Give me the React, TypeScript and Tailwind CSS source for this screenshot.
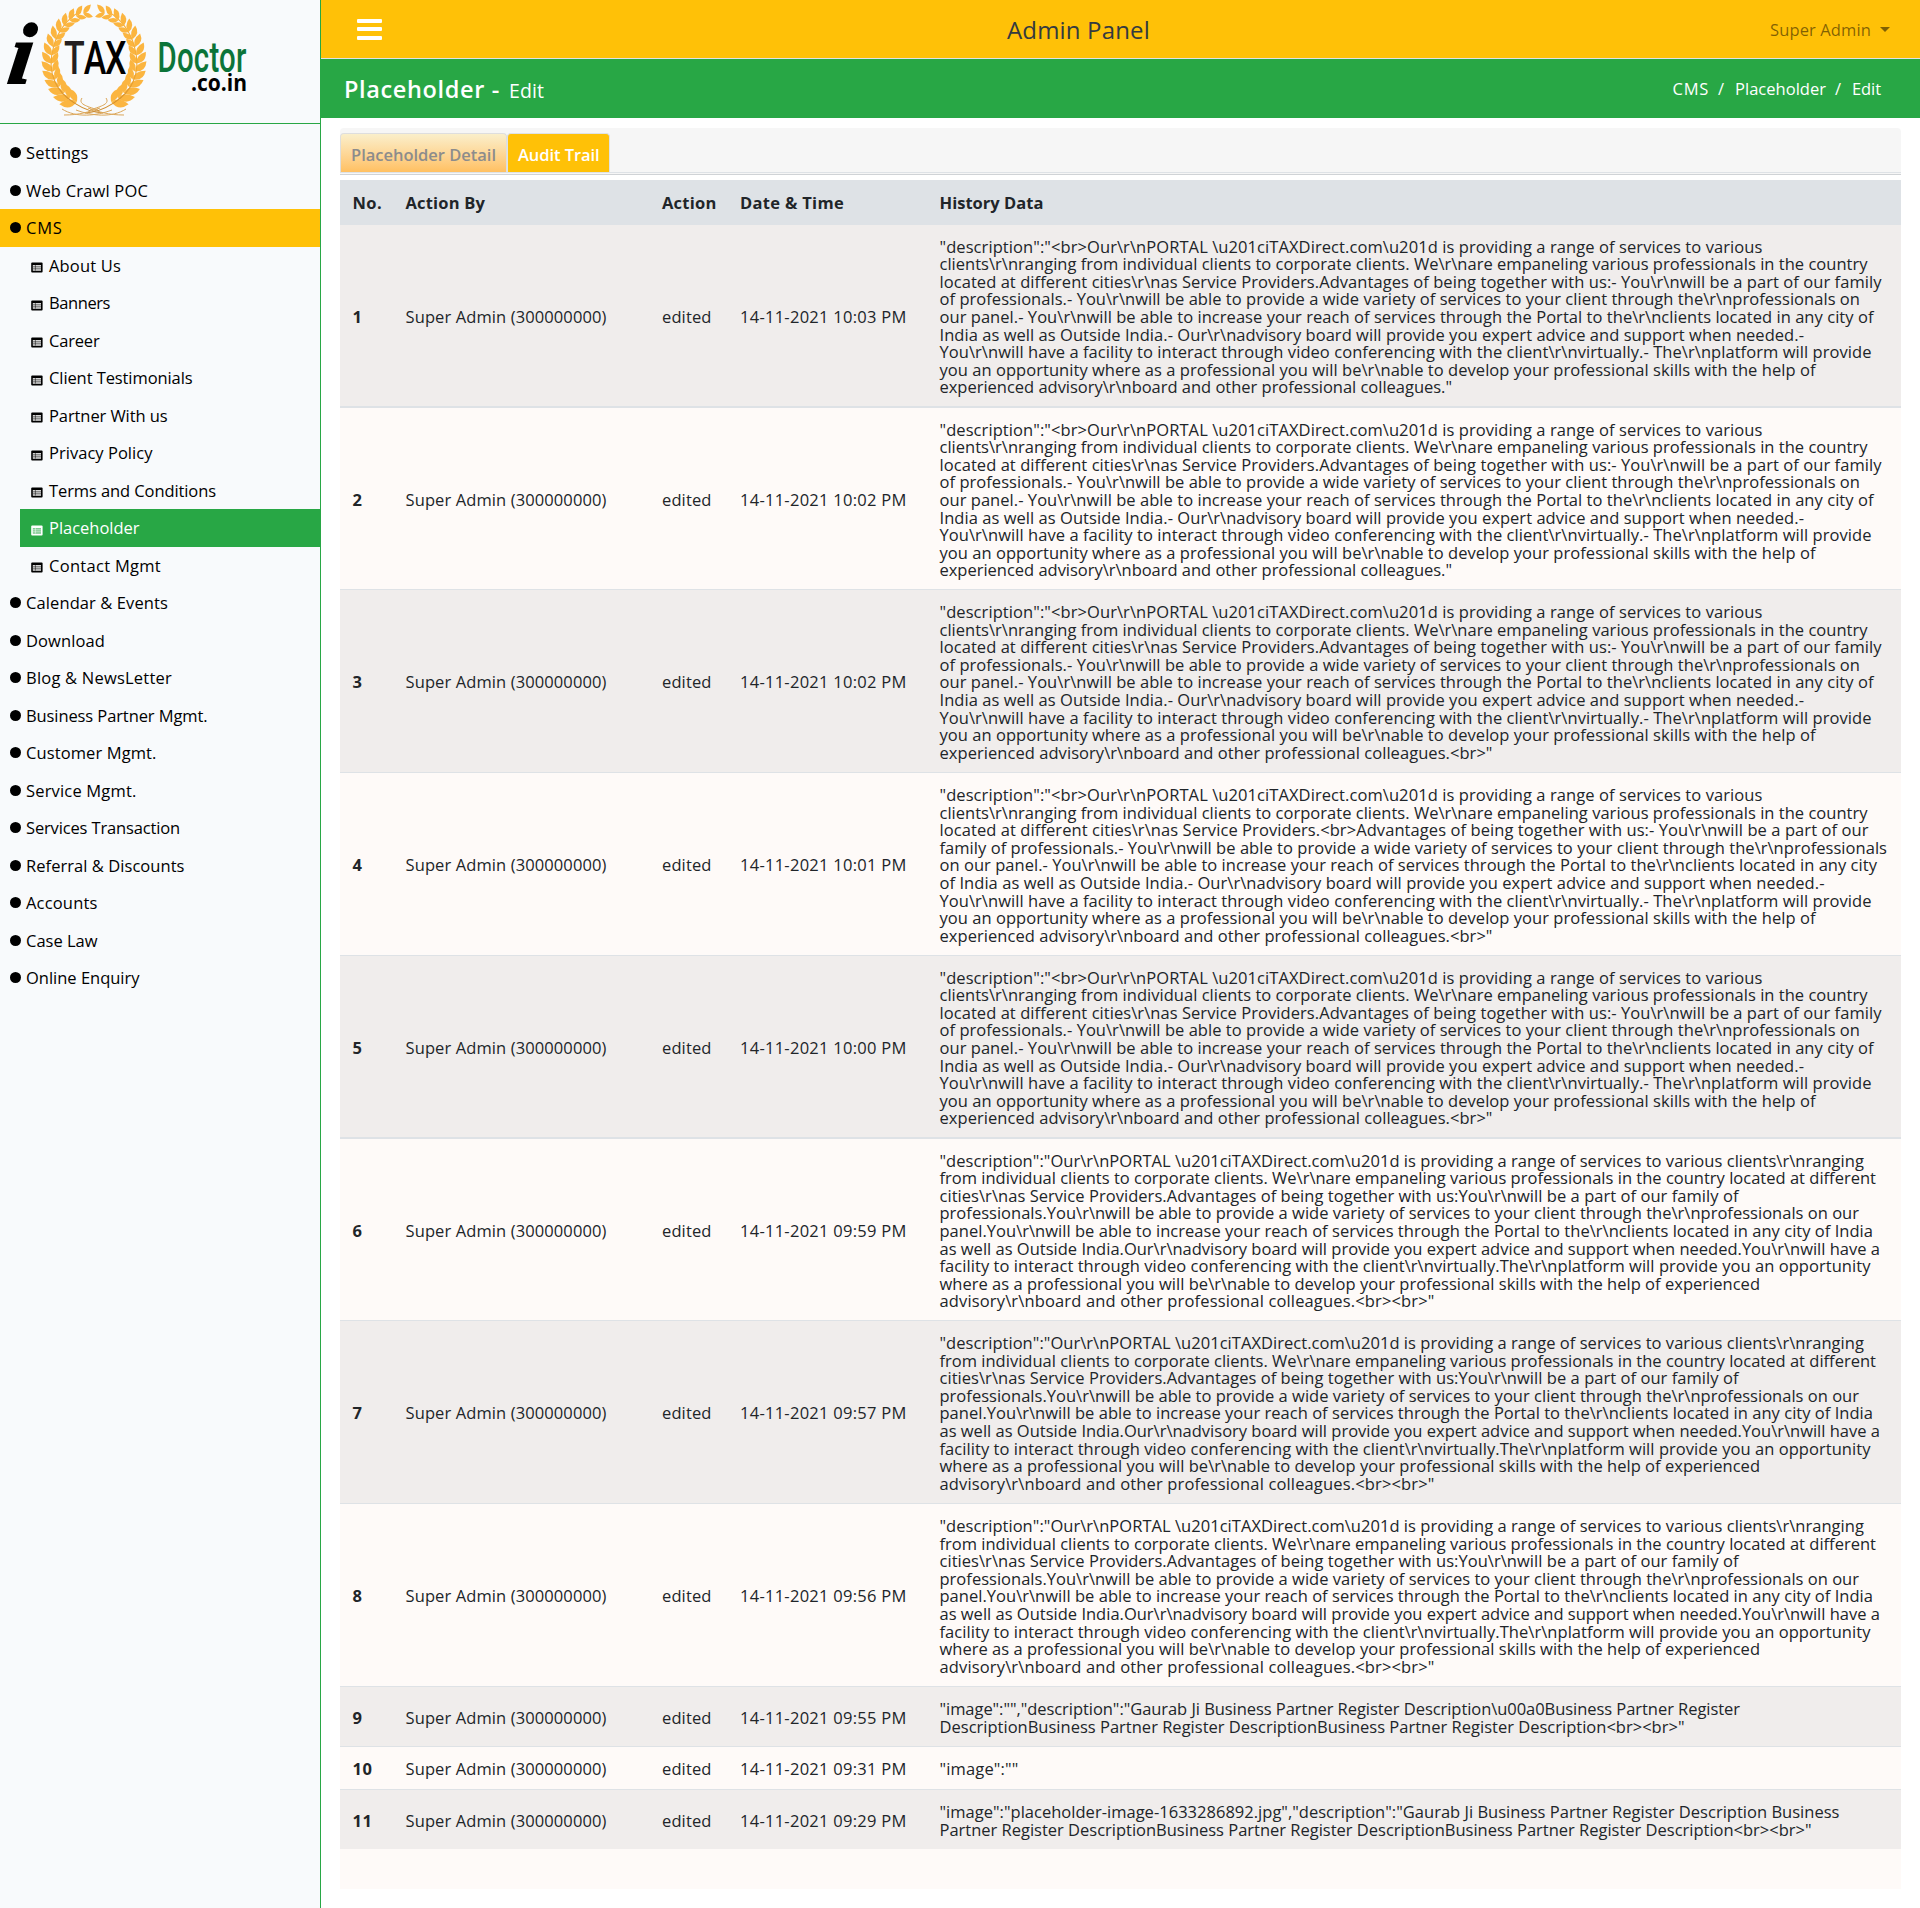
import { useLayoutEffect, useRef, useState } from "react";

/* Text set to a given width by spreading the difference over its letters. */
function Fit({ w, children, className = "" }: { w: number; children: string; className?: string }) {
  const ref = useRef<HTMLSpanElement>(null);
  const [spacing, setSpacing] = useState(0);
  useLayoutEffect(() => {
    if (!ref.current) return;
    const natural = ref.current.getBoundingClientRect().width - spacing * children.length;
    setSpacing((w - natural) / children.length);
  }, [w, children]);
  return (
    <span ref={ref} className={`inline-block whitespace-pre ${className}`} style={{ letterSpacing: `${spacing}px` }}>
      {children}
    </span>
  );
}

type Line = [string, number];

const intro: Line[] = [
  [String.raw`"description":"<br>Our\r\nPORTAL \u201ciTAXDirect.com\u201d is providing a range of services to various`, 823],
  [String.raw`clients\r\nranging from individual clients to corporate clients. We\r\nare empaneling various professionals in the country`, 928],
];
const ending: Line[] = [
  [String.raw`You\r\nwill have a facility to interact through video conferencing with the client\r\nvirtually.- The\r\nplatform will provide`, 932],
  [String.raw`you an opportunity where as a professional you will be\r\nable to develop your professional skills with the help of`, 876],
];
const body: Line[] = [
  ...intro,
  [String.raw`located at different cities\r\nas Service Providers.Advantages of being together with us:- You\r\nwill be a part of our family`, 942],
  [String.raw`of professionals.- You\r\nwill be able to provide a wide variety of services to your client through the\r\nprofessionals on`, 920.5],
  [String.raw`our panel.- You\r\nwill be able to increase your reach of services through the Portal to the\r\nclients located in any city of`, 934],
  [String.raw`India as well as Outside India.- Our\r\nadvisory board will provide you expert advice and support when needed.-`, 864.5],
  ...ending,
];
const lastPlain: Line = [String.raw`experienced advisory\r\nboard and other professional colleagues."`, 512.5];
const lastBr: Line = [String.raw`experienced advisory\r\nboard and other professional colleagues.<br>"`, 553];
const plain: Line[] = [...body, lastPlain];
const withBr: Line[] = [...body, lastBr];
const midBr: Line[] = [
  ...intro,
  [String.raw`located at different cities\r\nas Service Providers.<br>Advantages of being together with us:- You\r\nwill be a part of our`, 929],
  [String.raw`family of professionals.- You\r\nwill be able to provide a wide variety of services to your client through the\r\nprofessionals`, 947.5],
  [String.raw`on our panel.- You\r\nwill be able to increase your reach of services through the Portal to the\r\nclients located in any city`, 937.5],
  [String.raw`of India as well as Outside India.- Our\r\nadvisory board will provide you expert advice and support when needed.-`, 885],
  ...ending,
  lastBr,
];
const joined: Line[] = [
  [String.raw`"description":"Our\r\nPORTAL \u201ciTAXDirect.com\u201d is providing a range of services to various clients\r\nranging`, 924.5],
  [String.raw`from individual clients to corporate clients. We\r\nare empaneling various professionals in the country located at different`, 936.5],
  [String.raw`cities\r\nas Service Providers.Advantages of being together with us:You\r\nwill be a part of our family of`, 799],
  [String.raw`professionals.You\r\nwill be able to provide a wide variety of services to your client through the\r\nprofessionals on our`, 919.5],
  [String.raw`panel.You\r\nwill be able to increase your reach of services through the Portal to the\r\nclients located in any city of India`, 933.5],
  [String.raw`as well as Outside India.Our\r\nadvisory board will provide you expert advice and support when needed.You\r\nwill have a`, 940.5],
  [String.raw`facility to interact through video conferencing with the client\r\nvirtually.The\r\nplatform will provide you an opportunity`, 931],
  [String.raw`where as a professional you will be\r\nable to develop your professional skills with the help of experienced`, 820.5],
  [String.raw`advisory\r\nboard and other professional colleagues.<br><br>"`, 495],
];

const rows: { time: string; lines: Line[]; size: string }[] = [
  { time: "10:03", lines: plain, size: "h-[183px] border-b-2" },
  { time: "10:02", lines: plain, size: "h-[182px] border-b" },
  { time: "10:02", lines: withBr, size: "h-[183px] border-b" },
  { time: "10:01", lines: midBr, size: "h-[183px] border-b" },
  { time: "10:00", lines: withBr, size: "h-[183px] border-b-2" },
  { time: "09:59", lines: joined, size: "h-[182px] border-b" },
  { time: "09:57", lines: joined, size: "h-[183px] border-b" },
  { time: "09:56", lines: joined, size: "h-[183px] border-b" },
  {
    time: "09:55",
    lines: [
      [String.raw`"image":"","description":"Gaurab Ji Business Partner Register Description\u00a0Business Partner Register`, 800.5],
      [`DescriptionBusiness Partner Register DescriptionBusiness Partner Register Description<br><br>"`, 745],
    ],
    size: "h-[60px] border-b",
  },
  { time: "09:31", lines: [[`"image":""`, 79]], size: "h-[43px] border-b" },
  {
    time: "09:29",
    lines: [
      [`"image":"placeholder-image-1633286892.jpg","description":"Gaurab Ji Business Partner Register Description Business`, 900],
      [`Partner Register DescriptionBusiness Partner Register DescriptionBusiness Partner Register Description<br><br>"`, 872],
    ],
    size: "h-[59px]",
  },
];

const menu: { label: string; w: number; sub?: boolean }[] = [
  { label: "Settings", w: 62.5 },
  { label: "Web Crawl POC", w: 122 },
  { label: "CMS", w: 36.5 },
  { label: "About Us", w: 72, sub: true },
  { label: "Banners", w: 61, sub: true },
  { label: "Career", w: 50.5, sub: true },
  { label: "Client Testimonials", w: 143.5, sub: true },
  { label: "Partner With us", w: 118.5, sub: true },
  { label: "Privacy Policy", w: 103.5, sub: true },
  { label: "Terms and Conditions", w: 167, sub: true },
  { label: "Placeholder", w: 90.5, sub: true },
  { label: "Contact Mgmt", w: 112, sub: true },
  { label: "Calendar & Events", w: 142 },
  { label: "Download", w: 79 },
  { label: "Blog & NewsLetter", w: 146 },
  { label: "Business Partner Mgmt.", w: 181.5 },
  { label: "Customer Mgmt.", w: 130.5 },
  { label: "Service Mgmt.", w: 110.5 },
  { label: "Services Transaction", w: 154 },
  { label: "Referral & Discounts", w: 158.5 },
  { label: "Accounts", w: 71.5 },
  { label: "Case Law", w: 71.5 },
  { label: "Online Enquiry", w: 113.5 },
];

/* One half of the laurel wreath: leaves set along an elliptical stem. */
function Branch() {
  const leaves = [];
  for (let i = 0; i < 15; i++) {
    const deg = 24 + i * 10.1;
    const t = (deg * Math.PI) / 180;
    const x = 94 - 42.5 * Math.sin(t);
    const y = 59 + 47 * Math.cos(t);
    const dir = (Math.atan2(-47 * Math.sin(t), -42.5 * Math.cos(t)) * 180) / Math.PI;
    const l = 17.5 - i * 0.4;
    const h = 8.6 - i * 0.2;
    const d = `M0 0Q${l * 0.5} ${-h} ${l} 0Q${l * 0.4} ${h * 0.8} 0 0`;
    leaves.push(<path key={`o${i}`} d={d} transform={`translate(${x} ${y}) rotate(${dir - 34})`} />);
    leaves.push(<path key={`n${i}`} d={d} transform={`translate(${x} ${y}) rotate(${dir + 34}) scale(.85 -.85)`} />);
  }
  return (
    <g>
      {leaves}
      <path d="M103 113C84 112 62 98 55 82C46 62 53 28 79 12" fill="none" stroke="url(#gold)" strokeWidth="1.1" />
      <path d="M112 110C96 116 76 118 62 109M98 110C86 106 78 104 82 98M124 115C108 115 100 112 88 108" fill="none" stroke="#dca75a" strokeWidth="1" />
    </g>
  );
}

function Logo() {
  return (
    <svg width="260" height="122" viewBox="0 0 260 122" overflow="visible">
      <defs>
        <linearGradient id="gold" gradientUnits="userSpaceOnUse" x1="0" y1="5" x2="0" y2="115">
          <stop offset="0" stopColor="#fbb540" />
          <stop offset=".55" stopColor="#f5aa33" />
          <stop offset="1" stopColor="#c8872c" />
        </linearGradient>
      </defs>
      <g fill="url(#gold)">
        <Branch />
        <g transform="translate(188 0) scale(-1 1)">
          <Branch />
        </g>
      </g>
      <text x="0" y="0" transform="translate(6 83) skewX(-8)" fontSize="86" fontWeight="700" fontStyle="italic" stroke="#000" strokeWidth="2" className="font-['Liberation_Serif',serif]">i</text>
      <text x="0" y="0" transform="translate(64 74) scale(.74 1)" fontSize="46" fontWeight="500" className="font-['Roboto',sans-serif] tracking-[-1.5px]"><tspan fill="#231f20">T</tspan><tspan>AX</tspan></text>
      <text x="0" y="0" transform="translate(157.5 72) scale(.7 1)" fontSize="42" fontWeight="500" fill="#0b7439" textLength="127" lengthAdjust="spacing" className="font-['Roboto',sans-serif]">Doctor</text>
      <text x="191" y="91" fontSize="23" fontWeight="700" textLength="56" lengthAdjust="spacingAndGlyphs" className="font-['Open_Sans',sans-serif]">.co.in</text>
    </svg>
  );
}

function ListIcon({ active }: { active: boolean }) {
  const ink = active ? "#fff" : "#000";
  const fill = active ? "#7fcb92" : "#d6d6d6";
  return (
    <svg width="12" height="11" viewBox="0 0 12 11" className="mt-[5px] shrink-0">
      <rect x="0.2" y="0.4" width="11.4" height="10" rx="1" fill={ink} />
      <rect x="1.8" y="3" width="8.2" height="5.8" fill={fill} />
      <path d="M2 4.8H10M2 6.8H10M4.4 3V8.6" stroke={ink} strokeWidth=".5" />
    </svg>
  );
}

const cols = "grid grid-cols-[53px_256.5px_78px_199.5px_1fr]";

export default function App() {
  return (
    <div className="flex h-[1908px] w-[1920px] overflow-hidden bg-white font-['Open_Sans','Noto_Sans',sans-serif] text-[16.5px] leading-[17.6px] text-[#212529]">
      <aside className="w-[321px] shrink-0 border-r border-[#28a745] bg-[#f8fafc] text-black">
        <div className="h-[124px] border-b border-[#28a745]">
          <Logo />
        </div>
        <nav className="pt-[10px]">
          {menu.map((m) => {
            const active = m.label === "Placeholder";
            return m.sub ? (
              <div key={m.label} className={`ml-5 flex h-[37.5px] items-center pl-[11px] ${active ? "bg-[#28a745] text-white" : ""}`}>
                <ListIcon active={active} />
                <Fit w={m.w} className="ml-[6px] pt-[1px]">{m.label}</Fit>
              </div>
            ) : (
              <div key={m.label} className={`flex h-[37.5px] items-center pl-[10px] ${m.label === "CMS" ? "bg-[#ffc107]" : ""}`}>
                <span className="size-[11px] shrink-0 rounded-full bg-black" />
                <Fit w={m.w} className="ml-[5px] pt-[1px]">{m.label}</Fit>
              </div>
            );
          })}
        </nav>
      </aside>

      <div className="flex min-w-0 flex-1 flex-col">
        <header className="flex h-[59px] items-center border-b border-[#dee2e6] bg-[#ffc107] pl-9 pr-[29px]">
          <div className="flex w-[650px] flex-col gap-[4.5px]">
            <span className="h-1 w-[25px] rounded-[1px] bg-white" />
            <span className="h-1 w-[25px] rounded-[1px] bg-white" />
            <span className="h-1 w-[25px] rounded-[1px] bg-white" />
          </div>
          <Fit w={143} className="pt-[1px] text-[24px] font-medium leading-7 text-[#343a40]">Admin Panel</Fit>
          <div className="ml-auto flex w-[121px] items-center gap-[9px] text-black/50">
            <Fit w={101} className="pt-[2px]">Super Admin</Fit>
            <span className="border-x-[5.5px] border-t-[5.5px] border-x-transparent border-t-current" />
          </div>
        </header>

        <div className="flex h-[59px] items-center justify-between bg-[#28a745] pl-[23px] pr-[39px] text-white">
          <div className="flex items-baseline gap-[9px] pt-[2px]">
            <Fit w={156} className="text-[23.5px] font-semibold leading-7">Placeholder -</Fit>
            <Fit w={35} className="text-[19.5px] leading-7">Edit</Fit>
          </div>
          <div className="flex gap-[9px]">
            <Fit w={36.5}>CMS</Fit>
            <Fit w={8}>/</Fit>
            <Fit w={91}>Placeholder</Fit>
            <Fit w={8}>/</Fit>
            <Fit w={29}>Edit</Fit>
          </div>
        </div>

        <main className="pl-[19px] pr-[19px] pt-[10px]">
          <div className="rounded-t border-b border-[#d0d3d6] bg-[#f6f6f6] pb-px pt-[5px]">
            <div className="flex h-10 border-b border-[#dee2e6] font-semibold">
              <div className="w-[167px] rounded-t-[4px] border border-b-0 border-[#dedede] bg-linear-to-b from-[#faefcb] to-[#ffc061] pl-[10px] pt-[12px] text-[#8c8c8c]">
                <Fit w={145}>Placeholder Detail</Fit>
              </div>
              <div className="w-[103px] rounded-t-[4px] border border-b-0 border-[#dee2e6] bg-[#ffc107] pl-[10px] pt-[12px] text-white">
                <Fit w={81.5}>Audit Trail</Fit>
              </div>
            </div>
          </div>

          <div className="mt-[5px] h-[1709px] bg-[#fefaf8]">
            <div className={`${cols} h-[45px] items-center bg-[#dee2e6] pl-[0.5px] font-bold`}>
              <div className="pl-3"><Fit w={29.5}>No.</Fit></div>
              <div className="pl-3"><Fit w={79.5}>Action By</Fit></div>
              <div className="pl-3"><Fit w={54.5}>Action</Fit></div>
              <div className="pl-3"><Fit w={104}>Date & Time</Fit></div>
              <div className="pl-3"><Fit w={104}>History Data</Fit></div>
            </div>
            {rows.map((r, i) => (
              <div key={i} className={`${cols} ${r.size} items-center border-[#dee2e6] pl-[0.5px] pt-[2.5px] ${i % 2 ? "" : "bg-[#f0edec]"}`}>
                <div className="pl-3 font-bold"><Fit w={i > 8 ? 20 : 10}>{String(i + 1)}</Fit></div>
                <div className="pl-3"><Fit w={201}>Super Admin (300000000)</Fit></div>
                <div className="pl-3"><Fit w={49.5}>edited</Fit></div>
                <div className="pl-3"><Fit w={166.5}>{`14-11-2021 ${r.time} PM`}</Fit></div>
                <div className="pl-3">
                  {r.lines.map(([text, w], k) => (
                    <div key={k} className="h-[17.6px]"><Fit w={w}>{text}</Fit></div>
                  ))}
                </div>
              </div>
            ))}
          </div>
        </main>
      </div>
    </div>
  );
}
